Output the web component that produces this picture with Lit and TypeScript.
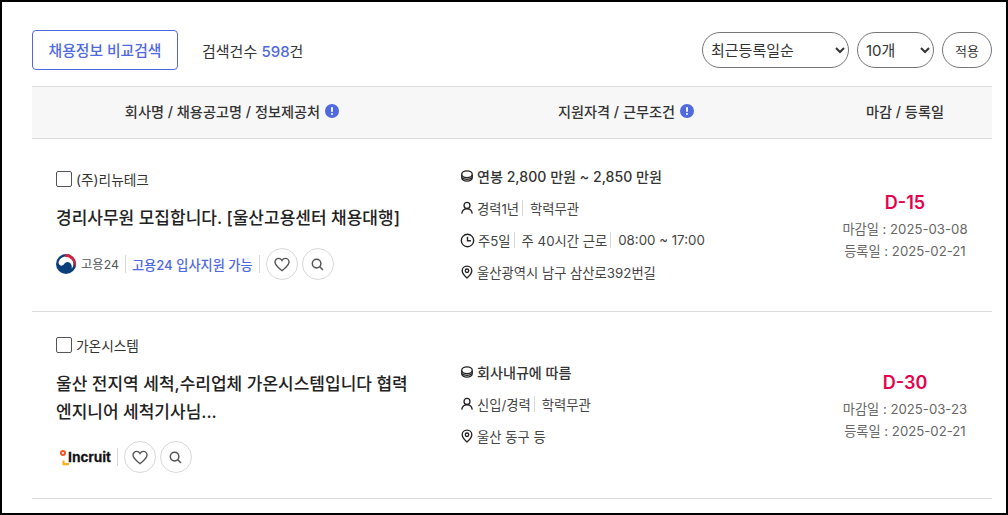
import { LitElement, html, css, svg } from 'lit';
import { customElement } from 'lit/decorators.js';

// ── Job list ──────────────────────────────────────────────────────────────────

interface Job {
  company: string;
  title: string[];
  source: 'work24' | 'incruit';
  pay: string;
  career: string[];
  hours?: string[];
  place: string;
  dday: string;
  due: string;
  reg: string;
}

const JOBS: Job[] = [
  {
    company: '(주)리뉴테크',
    title: ['경리사무원 모집합니다. [울산고용센터 채용대행]'],
    source: 'work24',
    pay: '연봉 2,800 만원 ~ 2,850 만원',
    career: ['경력1년', '학력무관'],
    hours: ['주5일', '주 40시간 근로', '08:00 ~ 17:00'],
    place: '울산광역시 남구 삼산로392번길',
    dday: 'D-15',
    due: '2025-03-08',
    reg: '2025-02-21',
  },
  {
    company: '가온시스템',
    title: ['울산 전지역 세척,수리업체 가온시스템입니다 협력', '엔지니어 세척기사님...'],
    source: 'incruit',
    pay: '회사내규에 따름',
    career: ['신입/경력', '학력무관'],
    place: '울산 동구 등',
    dday: 'D-30',
    due: '2025-03-23',
    reg: '2025-02-21',
  },
];

const icon = (body: unknown, size = 14) => html`<svg
  class="ico"
  width=${size}
  height=${size}
  viewBox="0 0 16 16"
  fill="none"
  stroke="currentColor"
  stroke-width="1.5"
>${body}</svg>`;

const coinIcon = icon(svg`<ellipse cx="8" cy="6" rx="6" ry="3.9"/><path d="M2 6.500v3.500c0 2.200 2.700 3.800 6 3.800s6-1.600 6-3.800V6.500M2.400 9.800c1 1.300 3 2 5.600 2s4.600-.7 5.600-2"/>`);
const userIcon = icon(svg`<circle cx="8" cy="5" r="3.400"/><path d="M2 14.500c.4-3.400 2.800-5.600 6-5.600s5.600 2.200 6 5.600"/>`);
const clockIcon = icon(svg`<circle cx="8" cy="8" r="6.600"/><path d="M8 4v4.300h3.600"/>`, 15);
const pinIcon = icon(svg`<path d="M8 1.200c-3.200 0-5.500 2.400-5.500 5.400 0 3.600 3.300 6.200 5.500 8.200 2.200-2 5.500-4.600 5.500-8.200 0-3-2.300-5.400-5.500-5.400z"/><circle cx="8" cy="6.600" r="2"/>`);
const infoIcon = html`<svg class="info" width="14" height="14" viewBox="0 0 14 14">
  <circle cx="7" cy="7" r="7" fill="#4f69e0"/>
  <rect x="6.100" y="3" width="1.800" height="5" rx=".7" fill="#fff"/>
  <circle cx="7" cy="10" r="1" fill="#fff"/>
</svg>`;
const heartIcon = html`<svg width="16" height="15" viewBox="0 0 16 15" fill="none" stroke="#555" stroke-width="1.400">
  <path d="M8 13.600C5 11.200 1 8.600 1 5.100 1 2.900 2.700 1.400 4.600 1.400 6 1.400 7.300 2.200 8 3.500c.7-1.300 2-2.100 3.400-2.100 1.900 0 3.600 1.500 3.600 3.700 0 3.500-4 6.100-7 8.500z"/>
</svg>`;
const searchIcon = html`<svg width="13" height="13" viewBox="0 0 13 13" fill="none" stroke="#555" stroke-width="1.500">
  <circle cx="5.600" cy="5.600" r="4.300"/>
  <path d="M8.800 8.800l3.200 3.200"/>
</svg>`;
// navy disc, white sweep through the middle, red arc on the top right
const taegeuk = html`<svg class="mark" width="20" height="20" viewBox="0 0 20 20">
  <circle cx="10" cy="10" r="10" fill="#0b3f7c"/>
  <path d="M2.500 9C3 5 6.500 2.600 10 2.600c4 0 7.400 3.400 7.400 7.400 0 2-.8 3.500-1.700 4.500.6-3.500-1.200-6.500-4.200-6.500-2 0-2.800 1.500-4 2.800C6 12.300 3.500 11.800 2.500 9z" fill="#fff"/>
  <path d="M9.500 0A10 10 0 0 1 20 10c0 1.500-.4 3-1 4.300.3-5.300-3.500-11.300-10-11.500z" fill="#d8213c"/>
</svg>`;
const incruitMark = html`<svg class="mark incruit-mark" width="10" height="20" viewBox="0 0 10 20">
  <circle cx="5" cy="6" r="2" fill="#fff" stroke="#ee5a24" stroke-width="2"/>
  <path d="M5.500 13.500v3.600h5.500" fill="none" stroke="#fbb117" stroke-width="2.200"/>
</svg>`;

@customElement('app-root')
export class AppRoot extends LitElement {
  static styles = css`
    :host {
      display: block;
      height: 515px;
      box-sizing: border-box;
      border: 2px solid #000;
      background: #fff;
      overflow: hidden;
      font-family: 'Inter', 'Noto Sans CJK KR', sans-serif;
      color: #333;
      font-size: 14px;
    }
    .wrap {
      margin: 0 14px 0 30px;
    }
    .toolbar {
      display: flex;
      align-items: center;
      height: 40px;
      margin-top: 28px;
    }
    .compare {
      width: 146px;
      height: 40px;
      box-sizing: border-box;
      border: 1px solid #4f69e0;
      border-radius: 4px;
      background: #fff;
      color: #4f69e0;
      font: inherit;
      font-size: 14.800px;
      font-weight: 500;
      padding: 0 0 2px;
    }
    .count {
      margin-left: 24px;
      font-size: 15px;
      color: #333;
    }
    .count b {
      color: #4f69e0;
      font-weight: 500;
    }
    .controls {
      margin-left: auto;
      display: flex;
      gap: 8px;
      align-items: center;
    }
    select, .apply {
      height: 36px;
      box-sizing: border-box;
      border: 1px solid #767676;
      border-radius: 18px;
      background: #fff;
      color: #333;
      font: inherit;
      font-size: 15px;
      padding: 0 0 0 4px;
    }
    .sort { width: 147px; }
    .size { width: 77px; }
    .apply {
      width: 50px;
      padding: 0;
      font-size: 13px;
    }
    .head, .row {
      display: grid;
      grid-template-columns: 400px 386px 174px;
    }
    .head {
      margin-top: 16px;
      height: 53px;
      box-sizing: border-box;
      background: #f7f7f7;
      border-top: 1px solid #dcdcdc;
      border-bottom: 1px solid #dcdcdc;
      font-size: 14.200px;
      font-weight: 500;
      color: #333;
      padding-bottom: 3px;
    }
    .head > div {
      display: flex;
      align-items: center;
      justify-content: center;
      gap: 5px;
    }
    .head > div:nth-child(2) { padding-left: 2px; }
    .info { flex: none; }
    .row {
      border-bottom: 1px solid #dcdcdc;
      box-sizing: border-box;
    }
    .row.first { height: 173px; }
    .row.second { height: 187px; }
    .main {
      padding-left: 24px;
    }
    .first .main { padding-top: 20px; }
    .second .main { padding-top: 13px; }
    .company {
      display: flex;
      align-items: center;
      gap: 4px;
      height: 40px;
      font-size: 13.700px;
      color: #333;
    }
    .box {
      width: 16px;
      height: 16px;
      box-sizing: border-box;
      border: 1px solid #555;
      border-radius: 2px;
      background: #fff;
    }
    .title {
      font-size: 17px;
      font-weight: 500;
      line-height: 28px;
      color: #222;
      margin-top: 5px;
      white-space: nowrap;
    }
    .source {
      display: flex;
      align-items: center;
      margin-top: 16px;
      height: 32px;
    }
    .second .source { margin-top: 15px; }
    .work24 {
      display: flex;
      align-items: center;
      gap: 5px;
      font-size: 12.300px;
      color: #555;
    }
    .incruit {
      display: flex;
      align-items: center;
      font-family: 'Liberation Sans', sans-serif;
      font-size: 14px;
      font-weight: 700;
      color: #111;
      -webkit-text-stroke: 0.3px #111;
      margin-left: 2px;
    }
    .incruit-mark { overflow: visible; }
    .apply-note {
      color: #4f69e0;
      font-size: 13.200px;
      font-weight: 500;
    }
    .sep {
      width: 1px;
      height: 18px;
      background: #d8d8d8;
      margin: 0 6px;
      flex: none;
    }
    .circle {
      width: 32px;
      height: 32px;
      box-sizing: border-box;
      border: 1px solid #d8d8d8;
      border-radius: 50%;
      display: flex;
      align-items: center;
      justify-content: center;
      margin-right: 4px;
      background: #fff;
    }
    .mark { flex: none; }
    .cond {
      padding-left: 28px;
    }
    .first .cond { padding-top: 21px; }
    .second .cond { padding-top: 44px; }
    .line {
      display: flex;
      align-items: center;
      height: 32px;
      font-size: 13.300px;
      color: #444;
      white-space: nowrap;
    }
    .line .ico {
      margin-right: 3px;
      color: #222;
      flex: none;
    }
    .line.pay {
      font-weight: 500;
      font-size: 14.100px;
      color: #333;
    }
    .line .sep {
      height: 16px;
      margin: 0 7px 0 3px;
    }
    .dates {
      text-align: center;
      font-size: 13.200px;
      line-height: 22px;
      color: #666;
      align-self: center;
      padding-top: 2px;
    }
    .dday {
      color: #e6004c;
      font-size: 18px;
      font-weight: 600;
      line-height: 26px;
      margin-bottom: 2px;
    }
  `;

  private renderSource(job: Job) {
    if (job.source === 'work24') {
      return html`<span class="work24">${taegeuk}고용24</span>
        <span class="sep"></span>
        <span class="apply-note">고용24 입사지원 가능</span>
        <span class="sep"></span>`;
    }
    return html`<span class="incruit">${incruitMark}Incruit</span><span class="sep"></span>`;
  }

  private renderParts(parts: string[]) {
    return parts.map(
      (p, i) => html`${i > 0 ? html`<span class="sep"></span>` : ''}<span>${p}</span>`,
    );
  }

  private renderJob(job: Job, index: number) {
    return html`
      <div class="row ${index === 0 ? 'first' : 'second'}">
        <div class="main">
          <div class="company"><span class="box"></span>${job.company}</div>
          <div class="title">${job.title.map(t => html`<div>${t}</div>`)}</div>
          <div class="source">
            ${this.renderSource(job)}
            <span class="circle">${heartIcon}</span>
            <span class="circle">${searchIcon}</span>
          </div>
        </div>
        <div class="cond">
          <div class="line pay">${coinIcon}${job.pay}</div>
          <div class="line">${userIcon}${this.renderParts(job.career)}</div>
          ${job.hours ? html`<div class="line">${clockIcon}${this.renderParts(job.hours)}</div>` : ''}
          <div class="line">${pinIcon}${job.place}</div>
        </div>
        <div class="dates">
          <div class="dday">${job.dday}</div>
          <div>마감일 : ${job.due}</div>
          <div>등록일 : ${job.reg}</div>
        </div>
      </div>
    `;
  }

  render() {
    return html`
      <div class="wrap">
        <div class="toolbar">
          <button class="compare">채용정보 비교검색</button>
          <span class="count">검색건수 <b>598</b>건</span>
          <div class="controls">
            <select class="sort"><option>최근등록일순</option></select>
            <select class="size"><option>10개</option></select>
            <button class="apply">적용</button>
          </div>
        </div>
        <div class="head">
          <div>회사명 / 채용공고명 / 정보제공처 ${infoIcon}</div>
          <div>지원자격 / 근무조건 ${infoIcon}</div>
          <div>마감 / 등록일</div>
        </div>
        ${JOBS.map((job, i) => this.renderJob(job, i))}
      </div>
    `;
  }
}
